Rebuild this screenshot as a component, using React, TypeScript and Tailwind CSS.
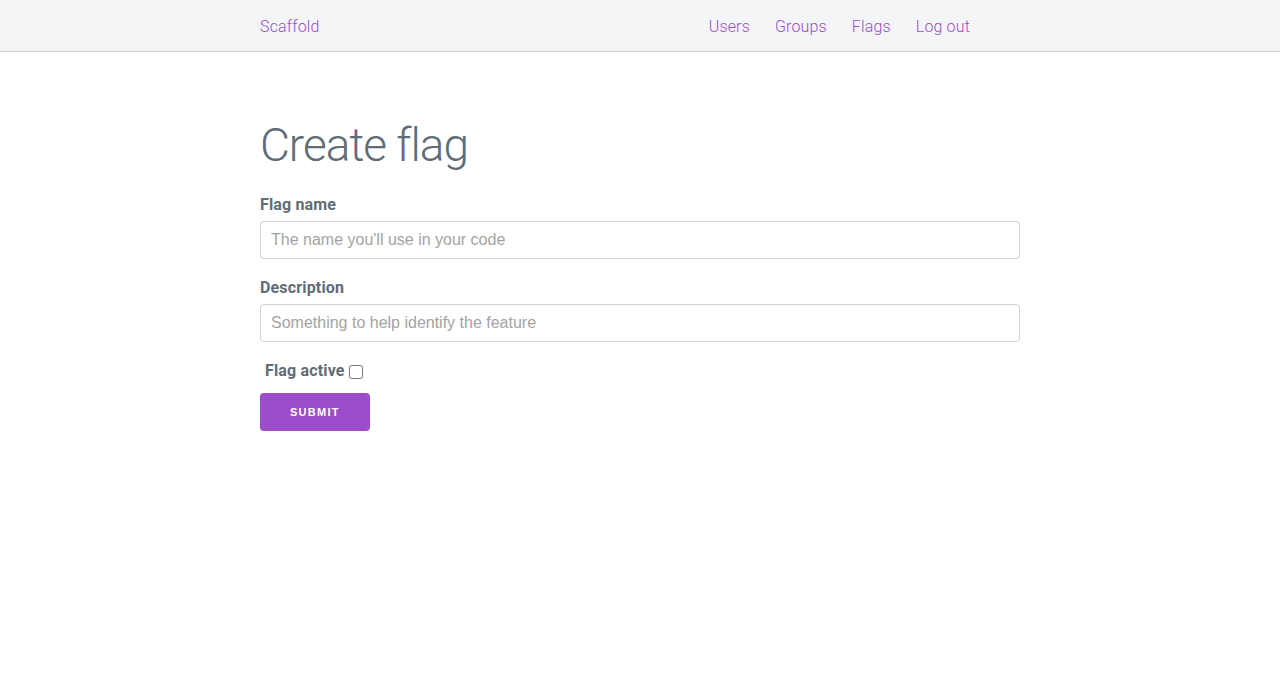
import { useState } from "react";

const NAV_LINKS = ["Users", "Groups", "Flags", "Log out"];

const inputClass =
  "mb-[16px] block h-[38px] w-full rounded-[4px] border border-[#d1d1d1] px-[10px] font-['Liberation_Sans',Arial,sans-serif] text-[16px] font-normal tracking-normal placeholder:text-[#a3a3a3] focus:border-[#9b4dca] focus:outline-none";

export default function App() {
  const [name, setName] = useState("");
  const [description, setDescription] = useState("");
  const [active, setActive] = useState(false);

  return (
    <div className="min-h-[676px] bg-white font-['Roboto',sans-serif] font-light text-[16px] tracking-[0.01em] text-[#606c76]">
      <nav className="h-[52px] border-b border-[#d1d1d1] bg-[#f4f5f6]">
        <div className="mx-auto flex h-full w-[760px] items-center justify-between pt-[2px]">
          <a href="#" className="text-[#9b4dca]">Scaffold</a>
          <div className="flex items-center gap-[25px] pr-[50px]">
            {NAV_LINKS.map((link) => (
              <a key={link} href="#" className="text-[#9b4dca]">
                {link}
              </a>
            ))}
          </div>
        </div>
      </nav>

      <main className="mx-auto w-[760px] pt-[66px]">
        <h1 className="mb-[19px] text-[46px] font-light leading-[55px] tracking-[-1px]">Create flag</h1>
        <form onSubmit={(e) => e.preventDefault()}>
          <label className="mb-[3px] block font-bold leading-[1.6]">Flag name</label>
          <input
            value={name}
            onChange={(e) => setName(e.target.value)}
            placeholder="The name you'll use in your code"
            className={inputClass}
          />
          <label className="mb-[4px] block font-bold leading-[1.6]">Description</label>
          <input
            value={description}
            onChange={(e) => setDescription(e.target.value)}
            placeholder="Something to help identify the feature"
            className={inputClass}
          />
          <div className="mb-[9px] flex h-[26px] items-center pl-[5px]">
            <label className="font-bold leading-[1.6]">Flag active</label>
            <input
              type="checkbox"
              checked={active}
              onChange={(e) => setActive(e.target.checked)}
              className="ml-[4px] mt-[2px] h-[14px] w-[14px]"
            />
          </div>
          <button
            type="submit"
            className="h-[38px] rounded-[4px] bg-[#9b4dca] px-[30px] font-['Liberation_Sans',Arial,sans-serif] text-[11px] font-bold uppercase tracking-[0.08rem] text-white"
          >
            Submit
          </button>
        </form>
      </main>
    </div>
  );
}
